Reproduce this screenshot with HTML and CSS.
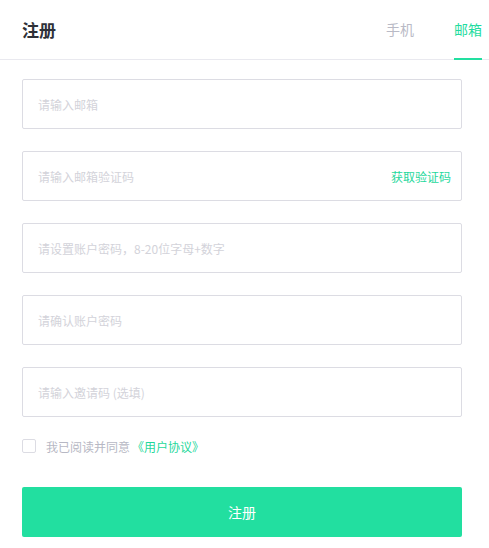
FILE: index.html
```html
<!DOCTYPE html>
<html lang="zh-CN">
<head>
    <meta charset="UTF-8">
    <meta name="viewport" content="width=device-width, initial-scale=1.0">
    <link rel="stylesheet" href="styles.css">
    <title>注册</title>
</head>
<body>

    <header class="top">
        <h1 class="title">注册</h1>
        <nav class="tabs">
            <span class="tab">手机</span>
            <span class="tab active">邮箱</span>
        </nav>
    </header>

    <form class="form">
        <div class="field">
            <input type="text" placeholder="请输入邮箱">
        </div>
        <div class="field">
            <input type="text" placeholder="请输入邮箱验证码">
            <span class="get-code">获取验证码</span>
        </div>
        <div class="field">
            <input type="password" placeholder="请设置账户密码，8-20位字母+数字">
        </div>
        <div class="field">
            <input type="password" placeholder="请确认账户密码">
        </div>
        <div class="field">
            <input type="text" placeholder="请输入邀请码 (选填)">
        </div>

        <label class="agree">
            <span class="box"></span>
            <span class="agree-text">我已阅读并同意</span>
            <a class="link">《用户协议》</a>
        </label>

        <button type="button" class="submit">注册</button>
    </form>

</body>
</html>
```

FILE: styles.css
```css
body {
    margin: 0;
    background-color: #ffffff;
    font-family: "Noto Sans CJK SC", "Liberation Sans", sans-serif;
    color: #333;
}

.top {
    height: 59px;
    border-bottom: 1px solid #e9e9ef;
    display: flex;
    justify-content: space-between;
    align-items: stretch;
    padding: 0 7px 0 22px;
}

.title {
    margin: 0;
    font-size: 17px;
    font-weight: bold;
    color: #2f3138;
    line-height: 59px;
}

.tabs {
    display: flex;
    gap: 40px;
}

.tab {
    font-size: 14px;
    color: #b9bac6;
    line-height: 59px;
    border-bottom: 2px solid transparent;
    margin-bottom: -1px;
    height: 58px;
}

.tab.active {
    color: #1fdca0;
    border-bottom-color: #22dfa0;
}

.form {
    padding: 19px 27px 0 22px;
    display: flex;
    flex-direction: column;
}

.field {
    height: 48px;
    border: 1px solid #dcdce3;
    border-radius: 2px;
    display: flex;
    align-items: center;
    margin-bottom: 22px;
}

.field input {
    flex: 1;
    border: none;
    outline: none;
    padding: 0 15px;
    font-family: inherit;
    font-size: 12px;
    height: 100%;
    background: transparent;
}

.field input::placeholder {
    color: #d3d3da;
}

.get-code {
    font-size: 12px;
    color: #1fd89c;
    padding-right: 10px;
}

.agree {
    display: flex;
    align-items: center;
    font-size: 12px;
    margin-top: -1px;
    height: 16px;
}

.box {
    width: 12px;
    height: 12px;
    border: 1px solid #dcdce3;
    border-radius: 2px;
    margin-right: 10px;
}

.agree-text {
    color: #b7b8c4;
    margin-right: 2px;
}

.link {
    color: #1fd89c;
}

.submit {
    margin-top: 33px;
    height: 50px;
    border: none;
    border-radius: 2px;
    background-color: #22dfa0;
    color: #ffffff;
    font-family: inherit;
    font-size: 14px;
    cursor: pointer;
}
```
